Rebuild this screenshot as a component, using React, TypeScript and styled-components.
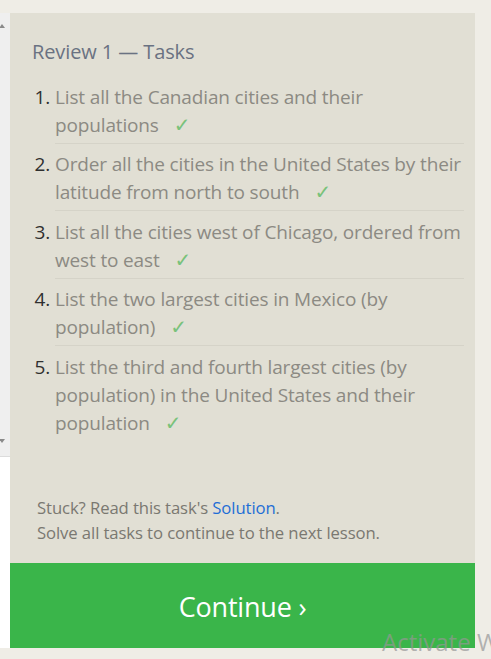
import React from "react";
import styled, { createGlobalStyle } from "styled-components";

const Global = createGlobalStyle`
  html, body { margin: 0; padding: 0; }
  body {
    background: #efede6;
    font-family: "Open Sans", "Noto Sans", Arial, sans-serif;
    width: 491px;
    height: 659px;
    overflow: hidden;
  }
`;

const Page = styled.div`
  position: relative;
  display: flex;
  align-items: flex-start;
  padding-top: 13px;
  height: 646px;
`;

const Rail = styled.div`
  width: 10px;
  height: 635px;
  display: flex;
  flex-direction: column;
  flex-shrink: 0;
`;

const RailTrack = styled.div`
  height: 444px;
  background: #efefef;
  border-bottom: 1px solid #dcdcdc;
  display: flex;
  flex-direction: column;
  justify-content: space-between;
  padding: 11px 0 13px;
  box-sizing: border-box;
`;

const RailArrow = styled.div<{ $down?: boolean }>`
  width: 0;
  height: 0;
  border-left: 3px solid transparent;
  border-right: 3px solid transparent;
  margin-left: -1px;
  ${(p) =>
    p.$down ? "border-top: 4px solid #8a8a8a;" : "border-bottom: 4px solid #8a8a8a;"}
`;

const RailRest = styled.div`
  flex: 1;
  background: #ffffff;
`;

const Panel = styled.div`
  width: 465px;
  height: 635px;
  background: #e1dfd4;
  display: flex;
  flex-direction: column;
  flex-shrink: 0;
`;

const Body = styled.div`
  flex: 1;
  padding: 27px 11px 0 22px;
  display: flex;
  flex-direction: column;
`;

const Title = styled.h2`
  margin: 0;
  font-weight: 400;
  font-size: 20px;
  line-height: 24px;
  color: #6a7282;
  letter-spacing: -0.1px;
`;

const List = styled.ol`
  list-style: none;
  margin: 12px 0 0;
  padding: 0;
`;

const Item = styled.li`
  display: grid;
  grid-template-columns: 18px 1fr;
  column-gap: 5px;
  font-size: 19px;
  line-height: 28px;
  letter-spacing: -0.15px;
`;

const Num = styled.span`
  text-align: right;
  color: #2f2f2f;
  padding-top: 6.5px;
`;

const Text = styled.div<{ $last?: boolean }>`
  color: #8c8a83;
  white-space: nowrap;
  padding: 6.5px 0 4px;
  border-bottom: ${(p) => (p.$last ? "1px solid transparent" : "1px solid #d5d3c8")};
`;

const Check = styled.span`
  color: #79c27b;
  margin-left: 15px;
  font-family: "DejaVu Sans", sans-serif;
  font-size: 20px;
`;

const Footer = styled.div`
  margin-top: auto;
  padding: 0 0 18px 5px;
  font-size: 16.7px;
  line-height: 25px;
  color: #7a7871;
  letter-spacing: -0.1px;
`;

const Link = styled.a`
  color: #1f6ed6;
  text-decoration: none;
`;

const ContinueButton = styled.button`
  height: 85px;
  border: none;
  background: #3ab54a;
  color: #ffffff;
  font-family: "Open Sans", "Noto Sans", Arial, sans-serif;
  font-size: 27px;
  letter-spacing: -0.2px;
  display: flex;
  align-items: center;
  justify-content: center;
  padding: 2px 0 0;
  cursor: pointer;
`;

const Watermark = styled.div`
  position: absolute;
  left: 382px;
  top: 626px;
  font-family: "Open Sans", "Noto Sans", Arial, sans-serif;
  font-size: 24px;
  line-height: 32px;
  color: rgba(150, 150, 150, 0.7);
  white-space: nowrap;
  pointer-events: none;
`;

const tasks: string[][] = [
  ["List all the Canadian cities and their", "populations"],
  ["Order all the cities in the United States by their", "latitude from north to south"],
  ["List all the cities west of Chicago, ordered from", "west to east"],
  ["List the two largest cities in Mexico (by", "population)"],
  [
    "List the third and fourth largest cities (by",
    "population) in the United States and their",
    "population",
  ],
];

export default function App() {
  return (
    <>
      <Global />
      <Page>
        <Rail>
          <RailTrack>
            <RailArrow />
            <RailArrow $down />
          </RailTrack>
          <RailRest />
        </Rail>
        <Panel>
          <Body>
            <Title>Review 1 — Tasks</Title>
            <List>
              {tasks.map((lines, i) => (
                <Item key={i}>
                  <Num>{i + 1}.</Num>
                  <Text $last={i === tasks.length - 1}>
                    {lines.map((l, j) => (
                      <React.Fragment key={j}>
                        {l}
                        {j === lines.length - 1 ? <Check>✓</Check> : <br />}
                      </React.Fragment>
                    ))}
                  </Text>
                </Item>
              ))}
            </List>
            <Footer>
              Stuck? Read this task's <Link href="#">Solution</Link>.
              <br />
              Solve all tasks to continue to the next lesson.
            </Footer>
          </Body>
          <ContinueButton>Continue ›</ContinueButton>
        </Panel>
        <Watermark>Activate W</Watermark>
      </Page>
    </>
  );
}
